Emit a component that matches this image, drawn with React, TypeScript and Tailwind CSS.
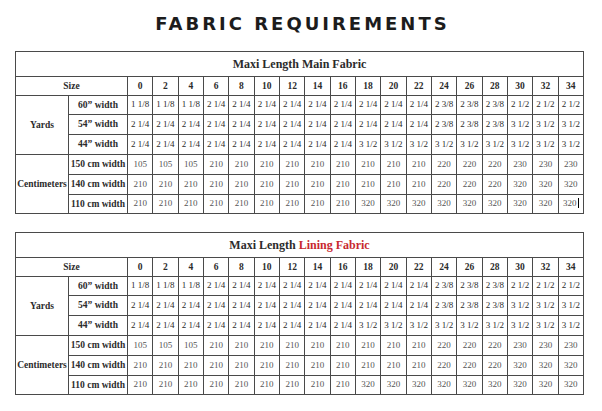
import React from 'react';

const sizes = ['0', '2', '4', '6', '8', '10', '12', '14', '16', '18', '20', '22', '24', '26', '28', '30', '32', '34'];

const rep = (v: string, n: number) => Array(n).fill(v) as string[];

const yardRows = [
  {
    label: '60” width',
    values: [...rep('1 1/8', 3), ...rep('2 1/4', 9), ...rep('2 3/8', 3), ...rep('2 1/2', 3)],
  },
  {
    label: '54” width',
    values: [...rep('2 1/4', 12), ...rep('2 3/8', 3), ...rep('3 1/2', 3)],
  },
  {
    label: '44” width',
    values: [...rep('2 1/4', 9), ...rep('3 1/2', 9)],
  },
];

const cmRows = [
  {
    label: '150 cm width',
    values: [...rep('105', 3), ...rep('210', 9), ...rep('220', 3), ...rep('230', 3)],
  },
  {
    label: '140 cm width',
    values: [...rep('210', 12), ...rep('220', 3), ...rep('320', 3)],
  },
  {
    label: '110 cm width',
    values: [...rep('210', 9), ...rep('320', 9)],
  },
];

const cell = 'border border-[#4a4a4a] text-center align-middle p-0';

const FabricTable: React.FC<{ title: React.ReactNode; caret?: boolean }> = ({ title, caret }) => (
  <table className="table-fixed border-collapse w-[569px] text-[#2b2b2b] font-['Liberation_Serif',serif]">
    <colgroup>
      <col className="w-[53px]" />
      <col className="w-[59px]" />
      {sizes.map((s) => (
        <col key={s} />
      ))}
    </colgroup>
    <tbody>
      <tr className="h-[25px]">
        <td colSpan={20} className={`${cell} text-[12px] font-bold`}>
          {title}
        </td>
      </tr>
      <tr className="h-[19px]">
        <td colSpan={2} className={`${cell} text-[9.5px] font-bold`}>
          Size
        </td>
        {sizes.map((s) => (
          <td key={s} className={`${cell} text-[9.5px] font-bold`}>
            {s}
          </td>
        ))}
      </tr>
      {yardRows.map((row, i) => (
        <tr key={row.label} className={i === 0 ? 'h-[19px]' : 'h-[20px]'}>
          {i === 0 && (
            <td rowSpan={3} className={`${cell} text-[9.5px] font-bold`}>
              Yards
            </td>
          )}
          <td className={`${cell} text-[9.5px] font-bold`}>{row.label}</td>
          {row.values.map((v, j) => (
            <td key={j} className={`${cell} text-[9px] whitespace-nowrap`}>
              {v}
            </td>
          ))}
        </tr>
      ))}
      {cmRows.map((row, i) => (
        <tr key={row.label} className={i === 2 ? 'h-[19px]' : 'h-[20px]'}>
          {i === 0 && (
            <td rowSpan={3} className={`${cell} text-[9.5px] font-bold`}>
              Centimeters
            </td>
          )}
          <td className={`${cell} text-[9.5px] font-bold whitespace-nowrap`}>{row.label}</td>
          {row.values.map((v, j) => (
            <td key={j} className={`${cell} text-[9px] text-[#555]`}>
              {caret && i === 2 && j === row.values.length - 1 ? (
                <span className="border-r border-black pr-px">{v}</span>
              ) : (
                v
              )}
            </td>
          ))}
        </tr>
      ))}
    </tbody>
  </table>
);

const App: React.FC = () => {
  return (
    <div className="w-[602px] h-[411px] bg-white overflow-hidden">
      <h1 className="pt-[13px] pl-[3px] text-center text-[18px] leading-[22px] font-bold tracking-[3px] text-[#1c1c1c] font-['DejaVu_Sans',sans-serif]">
        FABRIC REQUIREMENTS
      </h1>
      <div className="pl-[15px] pt-[16px] flex flex-col gap-[18px]">
        <FabricTable title="Maxi Length Main Fabric" caret />
        <FabricTable
          title={
            <>
              Maxi Length <span className="text-[#c8282f]">Lining Fabric</span>
            </>
          }
        />
      </div>
    </div>
  );
};

export default App;
